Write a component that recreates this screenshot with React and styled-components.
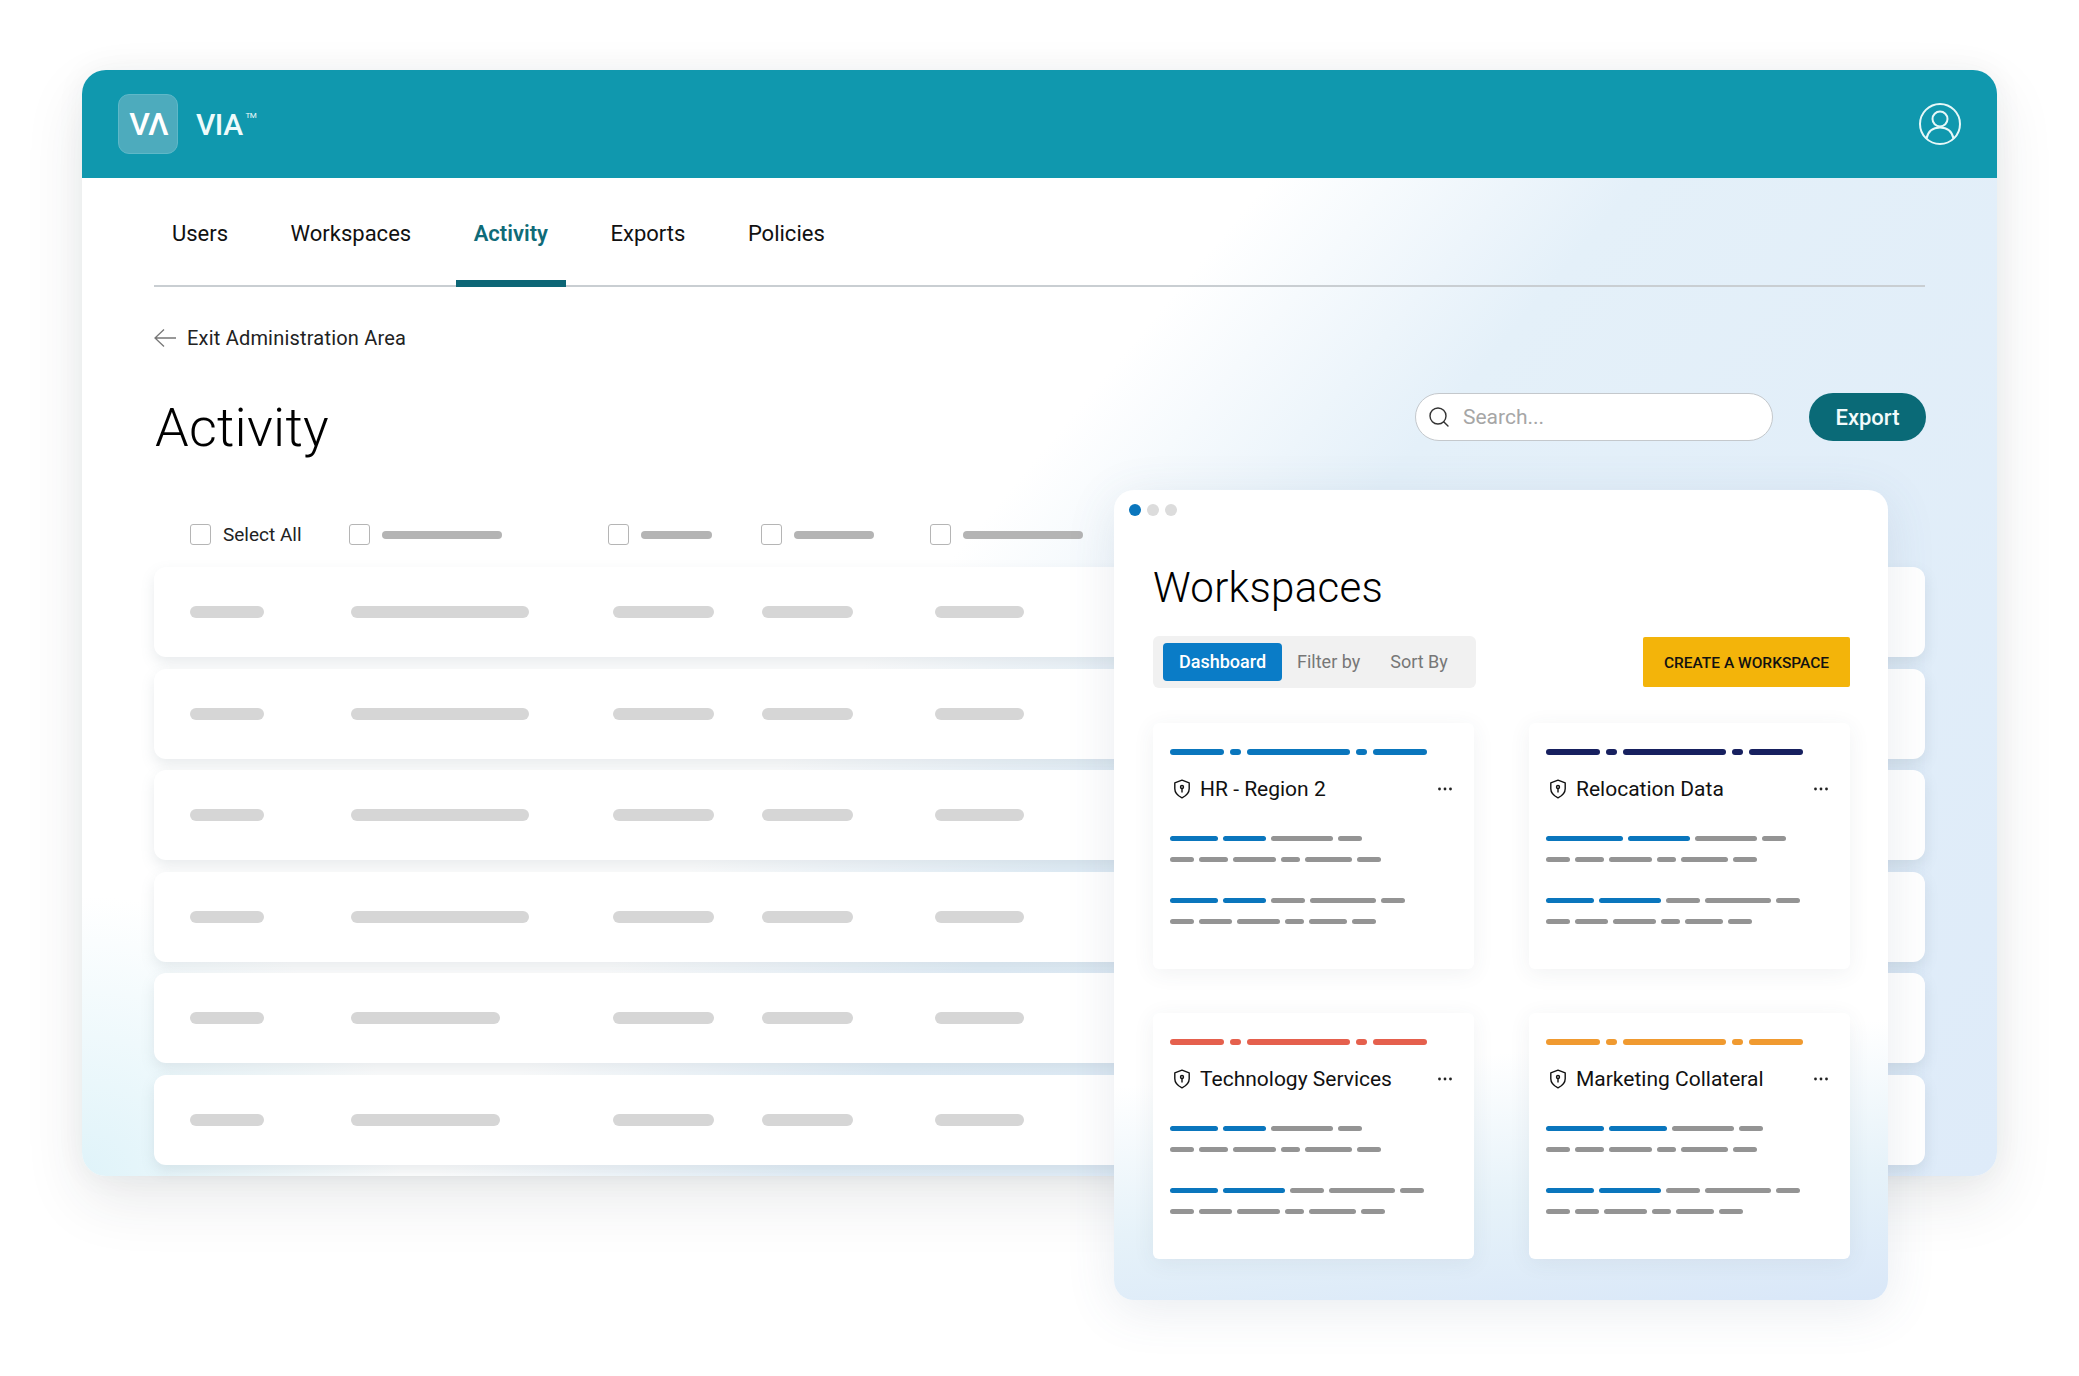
import styled, { createGlobalStyle } from "styled-components";
import { Search } from "lucide-react";

const GlobalStyle = createGlobalStyle`
  * { box-sizing: border-box; }
  body {
    margin: 0;
    background: #fff;
    font-family: "Roboto", "Liberation Sans", sans-serif;
    color: #111;
  }
`;

const BLUE = "#0a76bd";
const GREY = "#949494";

const columns = [
  { bar: 74 },
  { bar: 178 },
  { bar: 101 },
  { bar: 91 },
  { bar: 89 },
];

const workspaces = [
  {
    name: "HR - Region 2",
    accent: BLUE,
    lines: [
      [[48, 1], [43, 1], [62], [24]],
      [[24], [29], [43], [19], [47], [24]],
      [[48, 1], [43, 1], [34], [66], [24]],
      [[24], [33], [43], [19], [38], [24]],
    ],
  },
  {
    name: "Relocation Data",
    accent: "#17205f",
    lines: [
      [[77, 1], [62, 1], [62], [24]],
      [[24], [29], [43], [19], [47], [24]],
      [[48, 1], [62, 1], [34], [66], [24]],
      [[24], [33], [43], [19], [38], [24]],
    ],
  },
  {
    name: "Technology Services",
    accent: "#e5604d",
    lines: [
      [[48, 1], [43, 1], [62], [24]],
      [[24], [29], [43], [19], [47], [24]],
      [[48, 1], [62, 1], [34], [66], [24]],
      [[24], [33], [43], [19], [47], [24]],
    ],
  },
  {
    name: "Marketing Collateral",
    accent: "#f09a30",
    lines: [
      [[58, 1], [58, 1], [62], [24]],
      [[24], [29], [43], [19], [47], [24]],
      [[48, 1], [62, 1], [34], [66], [24]],
      [[24], [24], [43], [19], [38], [24]],
    ],
  },
];

function UserIcon() {
  return (
    <svg width="44" height="44" viewBox="0 0 44 44" fill="none" stroke="#e6f8f8" strokeWidth="2">
      <circle cx="22" cy="22" r="20" />
      <circle cx="22" cy="17" r="7.5" />
      <path d="M8.5 36.5c1.5-7 6.5-11 13.5-11s12 4 13.5 11" />
    </svg>
  );
}

function BackArrow() {
  return (
    <svg width="22" height="20" viewBox="0 0 22 20" fill="none" stroke="#777" strokeWidth="1.3">
      <path d="M22 10H1M10 1.5L1 10l9 8.5" />
    </svg>
  );
}

function ShieldIcon() {
  return (
    <svg width="20" height="20" viewBox="0 0 20 20" fill="none" stroke="#111" strokeWidth="1.4">
      <path d="M10 1.2l7.2 2.6v6c0 4-3 7-7.2 9-4.2-2-7.2-5-7.2-9v-6z" strokeLinejoin="round" />
      <circle cx="10" cy="8" r="1.5" />
      <path d="M10 9.5v4" />
    </svg>
  );
}

function MoreIcon() {
  return (
    <svg width="16" height="4" viewBox="0 0 16 4" fill="#222">
      <circle cx="2.5" cy="2" r="1.4" />
      <circle cx="8" cy="2" r="1.4" />
      <circle cx="13.5" cy="2" r="1.4" />
    </svg>
  );
}

function WorkspaceCard({ workspace }) {
  return (
    <Card>
      <AccentBar>
        {[54, 11, 103, 11, 54].map((w, i) => (
          <Segment key={i} $w={w} $h={6} $color={workspace.accent} />
        ))}
      </AccentBar>
      <CardTitleRow>
        <CardTitle>
          <ShieldIcon />
          {workspace.name}
        </CardTitle>
        <MoreIcon />
      </CardTitleRow>
      <LineGroup>
        {workspace.lines.map((line, i) => (
          <Line key={i}>
            {line.map(([w, blue], j) => (
              <Segment key={j} $w={w} $h={5} $color={blue ? BLUE : GREY} />
            ))}
          </Line>
        ))}
      </LineGroup>
    </Card>
  );
}

export default function App() {
  return (
    <Page>
      <GlobalStyle />
      <Window>
        <Header>
          <Brand>
            <LogoTile>VΛ</LogoTile>
            <BrandName>
              VIA<sup>TM</sup>
            </BrandName>
          </Brand>
          <UserIcon />
        </Header>
        <Body>
          <Nav>
            <Tab>Users</Tab>
            <Tab>Workspaces</Tab>
            <Tab $active>Activity</Tab>
            <Tab>Exports</Tab>
            <Tab>Policies</Tab>
          </Nav>
          <ExitLink>
            <BackArrow />
            Exit Administration Area
          </ExitLink>
          <TitleRow>
            <PageTitle>Activity</PageTitle>
            <Actions>
              <SearchBox>
                <Search size={24} strokeWidth={1.4} color="#333" />
                <SearchText>Search...</SearchText>
              </SearchBox>
              <ExportButton>Export</ExportButton>
            </Actions>
          </TitleRow>
          <TableHead>
            <HeadCell>
              <Checkbox />
              <SelectAll>Select All</SelectAll>
            </HeadCell>
            <HeadCell>
              <Checkbox />
              <HeadBar $w={120} />
            </HeadCell>
            <HeadCell>
              <Checkbox />
              <HeadBar $w={71} />
            </HeadCell>
            <HeadCell>
              <Checkbox />
              <HeadBar $w={80} />
            </HeadCell>
            <HeadCell>
              <Checkbox />
              <HeadBar $w={120} />
            </HeadCell>
          </TableHead>
          <Rows>
            {[0, 1, 2, 3, 4, 5].map((row) => (
              <Row key={row}>
                {columns.map((col, i) => (
                  <Placeholder key={i} $w={i === 1 && row > 3 ? 149 : col.bar} />
                ))}
              </Row>
            ))}
          </Rows>
        </Body>
        <Panel>
          <Dots>
            <Dot $on />
            <Dot />
            <Dot />
          </Dots>
          <PanelBody>
            <PanelTitle>Workspaces</PanelTitle>
            <PanelToolbar>
              <TabGroup>
                <PillActive>Dashboard</PillActive>
                <Pill>Filter by</Pill>
                <Pill>Sort By</Pill>
              </TabGroup>
              <CreateButton>CREATE A WORKSPACE</CreateButton>
            </PanelToolbar>
            <CardGrid>
              {workspaces.map((w) => (
                <WorkspaceCard key={w.name} workspace={w} />
              ))}
            </CardGrid>
          </PanelBody>
        </Panel>
      </Window>
    </Page>
  );
}

const Page = styled.div`
  width: 2079px;
  height: 1376px;
  padding: 70px 0 0 82px;
  overflow: hidden;
`;
const Window = styled.div`
  position: relative;
  width: 1915px;
  border-radius: 24px;
  box-shadow: 0 24px 60px rgba(40, 50, 60, 0.1), 0 0 30px rgba(40, 50, 60, 0.05);
  background:
    radial-gradient(ellipse 320px 280px at 0% 100%, #dff3f9 0%, rgba(223, 243, 249, 0) 100%),
    linear-gradient(130deg, #fff 45%, #e4f0f9 58%, #deebf9 100%);
`;
const Header = styled.header`
  height: 108px;
  padding: 0 35px 0 36px;
  display: flex;
  align-items: center;
  justify-content: space-between;
  background: #1098ae;
  border-radius: 24px 24px 0 0;
`;
const Brand = styled.div`
  display: flex;
  align-items: center;
  gap: 18px;
`;
const LogoTile = styled.div`
  width: 60px;
  height: 60px;
  display: flex;
  align-items: center;
  justify-content: center;
  border-radius: 11px;
  background: #4dabbd;
  border: 1px solid #5fb8c8;
  color: #fff;
  font-size: 32px;
  font-weight: 500;
  letter-spacing: -2px;
`;
const BrandName = styled.div`
  color: #eefbfb;
  font-size: 30px;
  font-weight: 500;
  letter-spacing: -0.5px;
  display: flex;
  align-items: flex-start;
  sup {
    font-size: 8px;
    font-weight: 400;
    margin: 5px 0 0 3px;
    line-height: 1;
  }
`;
const Body = styled.div`
  padding: 0 72px 11px 72px;
`;
const Nav = styled.nav`
  height: 109px;
  display: flex;
  gap: 26.5px;
  border-bottom: 2px solid #c9ced2;
`;
const Tab = styled.a`
  position: relative;
  height: 107px;
  padding: 3px 18px 0;
  display: flex;
  align-items: center;
  font-size: 22px;
  font-weight: ${(p) => (p.$active ? 600 : 400)};
  color: ${(p) => (p.$active ? "#0f6b78" : "#111")};
  &::after {
    content: "";
    display: ${(p) => (p.$active ? "block" : "none")};
    position: absolute;
    left: 0;
    right: 0;
    bottom: -2px;
    height: 7px;
    background: #0d6676;
  }
`;
const ExitLink = styled.div`
  margin-top: 39px;
  height: 24px;
  display: flex;
  align-items: center;
  gap: 11px;
  font-size: 20px;
  color: #222;
  letter-spacing: 0.2px;
`;
const TitleRow = styled.div`
  margin-top: 43px;
  height: 67px;
  display: flex;
  justify-content: space-between;
`;
const PageTitle = styled.h1`
  margin: 3px 0 0 1px;
  font-size: 54px;
  line-height: 64px;
  font-weight: 300;
  letter-spacing: 0.2px;
  color: #000;
`;
const Actions = styled.div`
  display: flex;
  gap: 36px;
  margin-right: -1px;
`;
const SearchBox = styled.div`
  width: 358px;
  height: 48px;
  padding-left: 11px;
  display: flex;
  align-items: center;
  gap: 12px;
  background: #fff;
  border: 1px solid #c4c8cc;
  border-radius: 24px;
`;
const SearchText = styled.span`
  font-size: 21px;
  color: #a6a6a6;
`;
const ExportButton = styled.button`
  width: 117px;
  height: 48px;
  border: none;
  border-radius: 24px;
  background: #0a6a77;
  color: #f2fbfb;
  font-family: inherit;
  font-size: 22px;
  font-weight: 500;
`;
const TableHead = styled.div`
  margin-top: 64px;
  padding-left: 36px;
  display: grid;
  grid-template-columns: 159px 259px 153px 169px auto;
`;
const HeadCell = styled.div`
  display: flex;
  align-items: center;
  gap: 12px;
  height: 21px;
`;
const Checkbox = styled.span`
  width: 21px;
  height: 21px;
  flex: none;
  background: #fff;
  border: 1.5px solid #b5b5b5;
  border-radius: 3px;
`;
const SelectAll = styled.span`
  font-size: 19px;
  color: #222;
`;
const HeadBar = styled.span`
  width: ${(p) => p.$w}px;
  height: 8px;
  border-radius: 4px;
  background: #b4b4b4;
`;
const Rows = styled.div`
  margin-top: 22px;
  display: flex;
  flex-direction: column;
  gap: 11.6px;
`;
const Row = styled.div`
  height: 90px;
  padding-left: 36px;
  display: grid;
  grid-template-columns: 161px 261.5px 149px 173px auto;
  align-items: center;
  background: #fff;
  border-radius: 12px;
  box-shadow: 0 6px 14px rgba(110, 130, 140, 0.16);
`;
const Placeholder = styled.span`
  width: ${(p) => p.$w}px;
  height: 12px;
  border-radius: 6px;
  background: #d6d6d6;
`;
const Panel = styled.section`
  position: absolute;
  left: 1032px;
  top: 420px;
  width: 774px;
  height: 810px;
  border-radius: 20px;
  background: linear-gradient(175deg, #fff 68%, #e6f2f9 85%, #d9e7f8 100%);
  box-shadow: 0 10px 50px rgba(70, 100, 130, 0.12);
`;
const Dots = styled.div`
  display: flex;
  gap: 6px;
  padding: 14px 15px 0;
`;
const Dot = styled.span`
  width: 12px;
  height: 12px;
  border-radius: 50%;
  background: ${(p) => (p.$on ? "#0a76bd" : "#dcdcdc")};
`;
const PanelBody = styled.div`
  padding: 47px 38px 0 39px;
`;
const PanelTitle = styled.h2`
  margin: 0;
  font-size: 42px;
  line-height: 50px;
  font-weight: 300;
  letter-spacing: 0.3px;
  color: #000;
`;
const PanelToolbar = styled.div`
  margin-top: 23px;
  display: flex;
  justify-content: space-between;
  align-items: center;
`;
const TabGroup = styled.div`
  width: 323px;
  height: 52px;
  padding: 0 10px;
  display: flex;
  align-items: center;
  gap: 15px;
  background: #f1f1f1;
  border-radius: 6px;
`;
const PillActive = styled.div`
  width: 119px;
  height: 38px;
  padding-bottom: 1px;
  display: flex;
  align-items: center;
  justify-content: center;
  border-radius: 4px;
  background: #0a7cc7;
  color: #fff;
  font-size: 18px;
  font-weight: 500;
`;
const Pill = styled.div`
  padding-right: 15px;
  padding-bottom: 2px;
  font-size: 18px;
  color: #777;
`;
const CreateButton = styled.button`
  width: 207px;
  height: 50px;
  padding-top: 2px;
  border: none;
  border-radius: 2px;
  background: #f3b40a;
  color: #111;
  font-family: inherit;
  font-size: 15.5px;
  font-weight: 500;
`;
const CardGrid = styled.div`
  margin-top: 35px;
  display: grid;
  grid-template-columns: 321px 321px;
  justify-content: space-between;
  row-gap: 44px;
`;
const Card = styled.article`
  height: 246px;
  padding: 26px 17px 0;
  background: #fff;
  border-radius: 6px;
  box-shadow: 0 4px 22px rgba(60, 70, 90, 0.07);
`;
const AccentBar = styled.div`
  display: flex;
  gap: 6px;
`;
const Segment = styled.span`
  width: ${(p) => p.$w}px;
  height: ${(p) => p.$h}px;
  border-radius: 3px;
  background: ${(p) => p.$color};
`;
const CardTitleRow = styled.div`
  margin-top: 19px;
  height: 28px;
  padding: 2px 4px 0 2px;
  display: flex;
  align-items: center;
  justify-content: space-between;
`;
const CardTitle = styled.div`
  display: flex;
  align-items: center;
  gap: 8px;
  font-size: 21px;
  color: #111;
`;
const LineGroup = styled.div`
  margin-top: 34px;
  display: flex;
  flex-direction: column;
  gap: 16px;
  & > :nth-child(3) { margin-top: 20px; }
`;
const Line = styled.div`
  display: flex;
  gap: 5px;
`;
